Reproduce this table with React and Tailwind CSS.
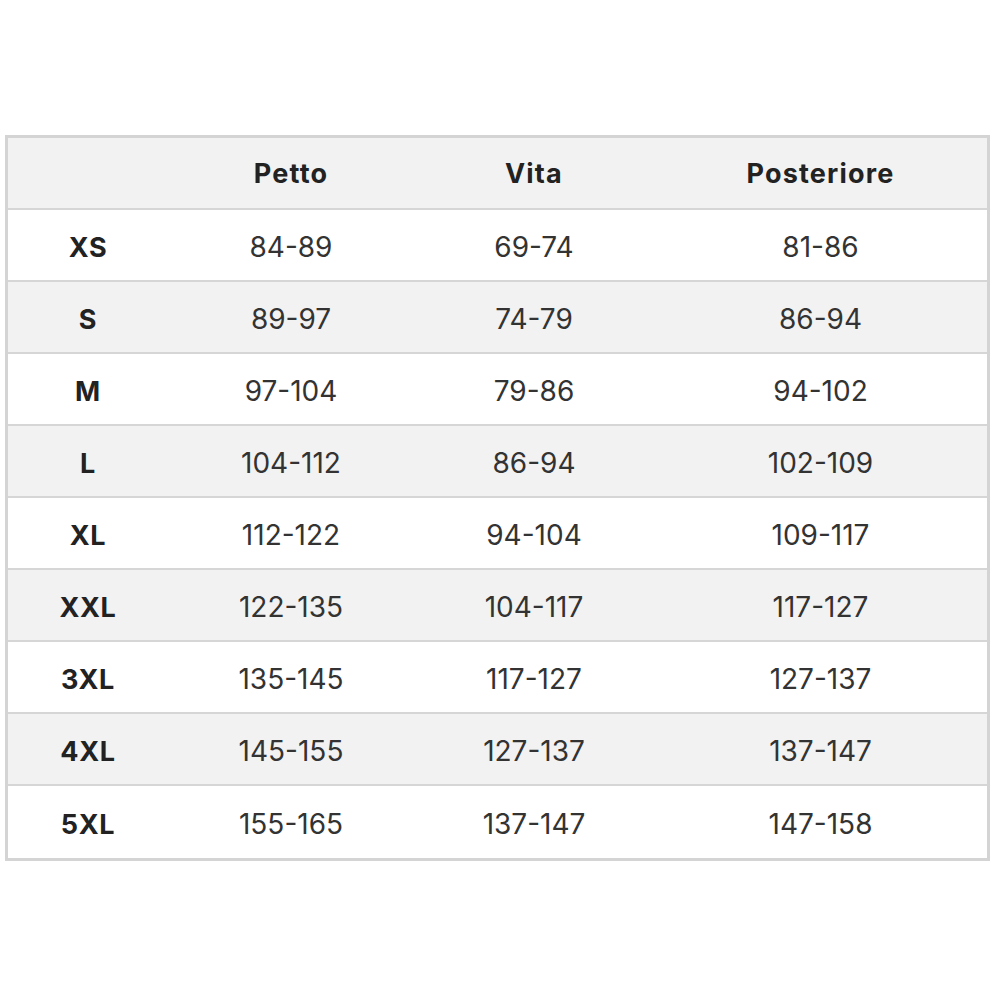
import React from "react";

const rows = [
  ["XS", "84-89", "69-74", "81-86"],
  ["S", "89-97", "74-79", "86-94"],
  ["M", "97-104", "79-86", "94-102"],
  ["L", "104-112", "86-94", "102-109"],
  ["XL", "112-122", "94-104", "109-117"],
  ["XXL", "122-135", "104-117", "117-127"],
  ["3XL", "135-145", "117-127", "127-137"],
  ["4XL", "145-155", "127-137", "137-147"],
  ["5XL", "155-165", "137-147", "147-158"],
];

export default function App() {
  return (
    <div
      className="w-[1000px] h-[1000px] bg-white pt-[135px] pl-[5px] pr-[10px]"
      style={{ fontFamily: "Inter, Lato, sans-serif" }}
    >
      <div className="border-[3px] border-[#d4d4d4] w-[985px]">
        <div className="grid grid-cols-[160px_246px_240px_333px] h-[72px] pt-[2px] border-b-2 border-[#d6d6d6] bg-[#f2f2f2] items-center text-[27px] font-bold tracking-[1.2px] text-[#222]">
          <div></div>
          <div className="text-center">Petto</div>
          <div className="text-center">Vita</div>
          <div className="text-center">Posteriore</div>
        </div>
        {rows.map((r, i) => (
          <div
            key={r[0]}
            className={
              "grid grid-cols-[160px_246px_240px_333px] h-[72px] pt-[3px] items-center text-[28px] leading-[36px] text-[#333] " +
              (i % 2 === 1 ? "bg-[#f2f2f2] " : "bg-white ") +
              (i < rows.length - 1 ? "border-b-2 border-[#d6d6d6]" : "")
            }
          >
            <div className="text-center font-bold text-[#222] text-[27px] leading-[36px] pt-[2px] tracking-[0.6px]">{r[0]}</div>
            <div className="text-center">{r[1]}</div>
            <div className="text-center">{r[2]}</div>
            <div className="text-center">{r[3]}</div>
          </div>
        ))}
      </div>
    </div>
  );
}
